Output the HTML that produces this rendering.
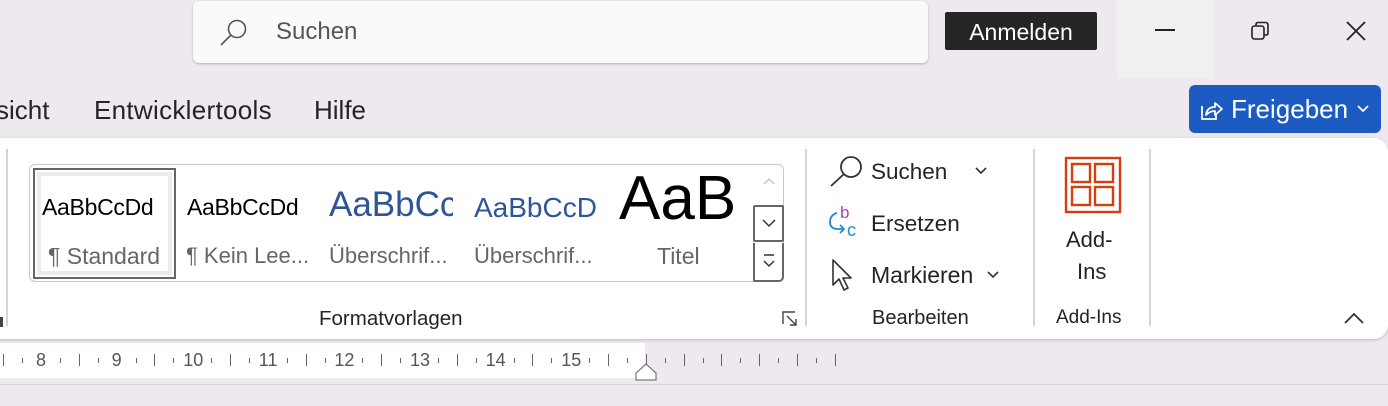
<!DOCTYPE html><html><head><meta charset="utf-8"><style>
*{margin:0;padding:0;box-sizing:border-box}
body{width:1388px;height:406px;background:#ede9ef;font-family:"Liberation Sans",sans-serif;position:relative;overflow:hidden;color:#242424}
.a{position:absolute;white-space:nowrap}
.t{font-size:26px;color:#242424}
.tk{position:absolute;width:1px;background:#666}
</style></head><body>
<div class="a" style="left:193px;top:1px;width:735px;height:62px;background:#fafafa;border-radius:6px;box-shadow:0 1px 2px rgba(0,0,0,.25)"></div>
<svg class="a" style="left:218px;top:16px" width="32" height="32" viewBox="0 0 32 32"><circle cx="19" cy="13" r="8.5" fill="none" stroke="#555" stroke-width="1.6"/><line x1="13" y1="19" x2="3" y2="29" stroke="#555" stroke-width="1.6"/></svg>
<div class="a" style="left:276px;top:18px;font-size:24px;color:#555">Suchen</div>
<div class="a" style="left:945px;top:12px;width:152px;height:38px;background:#252525;border-radius:2px;color:#fff;font-size:23px;text-align:center;line-height:40px">Anmelden</div>
<div class="a" style="left:1117px;top:0;width:96px;height:79px;background:#f1eff2"></div>
<div class="a" style="left:1155px;top:29px;width:20px;height:2px;background:#222"></div>
<svg class="a" style="left:1250px;top:20px" width="22" height="22" viewBox="0 0 22 22"><rect x="2" y="6" width="12" height="13" rx="2.5" fill="none" stroke="#222" stroke-width="1.6"/><path d="M6 6V4.5Q6 2.5 8 2.5H15.5Q18 2.5 18 5V13Q18 15 16 15H14" fill="none" stroke="#222" stroke-width="1.6"/></svg>
<svg class="a" style="left:1345px;top:20px" width="22" height="22"><path d="M2 2L20 20M20 2L2 20" stroke="#222" stroke-width="1.8"/></svg>
<div class="a t" style="left:-4px;top:95px">sicht</div>
<div class="a t" style="left:94px;top:95px;letter-spacing:0.3px">Entwicklertools</div>
<div class="a t" style="left:314px;top:95px">Hilfe</div>
<div class="a" style="left:1189px;top:85px;width:192px;height:48px;background:#1c5cc2;border-radius:6px"></div>
<svg class="a" style="left:1199px;top:97px" width="26" height="26" viewBox="0 0 26 26"><path d="M3 9V22H17V18" fill="none" stroke="#fff" stroke-width="1.8"/><path d="M7 18Q8 10 16 10V6L23 12L16 18V14Q11 14 7 18Z" fill="none" stroke="#fff" stroke-width="1.8" stroke-linejoin="round"/></svg>
<div class="a" style="left:1231px;top:94px;font-size:26px;color:#fff">Freigeben</div>
<svg class="a" style="left:1357px;top:104px" width="12" height="10"><path d="M1 2L6 7L11 2" fill="none" stroke="#fff" stroke-width="1.8"/></svg>
<div class="a" style="left:-20px;top:138px;width:1408px;height:201px;background:#fff;border-radius:0 14px 14px 0;box-shadow:0 1px 3px rgba(0,0,0,.2)"></div>
<div class="a" style="left:6px;top:149px;width:2px;height:177px;background:#d4d4d4"></div>
<div class="a" style="left:805px;top:149px;width:2px;height:177px;background:#d4d4d4"></div>
<div class="a" style="left:1033px;top:149px;width:2px;height:177px;background:#d4d4d4"></div>
<div class="a" style="left:1149px;top:149px;width:2px;height:177px;background:#d4d4d4"></div>
<div class="a" style="left:0;top:317px;width:3px;height:10px;background:#444"></div>
<div class="a" style="left:29px;top:164px;width:755px;height:118px;border:1.5px solid #c8c8c8;border-radius:6px"></div>
<div class="a" style="left:33px;top:168px;width:143px;height:111px;border:2px solid #666;background:#fff"></div>
<div class="a" style="left:37px;top:172px;width:135px;height:103px;border:4px solid #ececec"></div>
<div class="a" style="left:42px;top:194px;font-size:23px;color:#000;letter-spacing:-0.3px">AaBbCcDd</div>
<div class="a" style="left:187px;top:194px;font-size:23px;color:#000;letter-spacing:-0.3px">AaBbCcDd</div>
<div class="a" style="left:329px;top:185px;width:124px;overflow:hidden;font-size:35px;color:#2f5597">AaBbCcDd</div>
<div class="a" style="left:474px;top:192px;width:124px;overflow:hidden;font-size:28px;color:#2f5597">AaBbCcDd</div>
<div class="a" style="left:619px;top:163px;font-size:62px;color:#000">AaB</div>
<div class="a" style="left:48px;top:243px;font-size:23px;color:#666">¶ Standard</div>
<div class="a" style="left:186px;top:243px;font-size:22px;color:#666">¶ Kein Lee...</div>
<div class="a" style="left:329px;top:243px;font-size:22px;color:#666">Überschrif...</div>
<div class="a" style="left:474px;top:243px;font-size:22px;color:#666">Überschrif...</div>
<div class="a" style="left:657px;top:243px;font-size:23px;color:#666">Titel</div>
<svg class="a" style="left:763px;top:178px" width="12" height="8"><path d="M1 6L6 1L11 6" fill="none" stroke="#bbb" stroke-width="1.2"/></svg>
<div class="a" style="left:753px;top:205px;width:31px;height:37px;border:2px solid #666;border-radius:2px"></div>
<svg class="a" style="left:762px;top:219px" width="14" height="9"><path d="M1 1L7 7L13 1" fill="none" stroke="#333" stroke-width="1.5"/></svg>
<div class="a" style="left:753px;top:243px;width:31px;height:39px;border:2px solid #666;border-top:none;border-radius:0 0 5px 2px"></div>
<svg class="a" style="left:762px;top:253px" width="14" height="18"><path d="M2 2H12M2 8L7 13L12 8" fill="none" stroke="#333" stroke-width="1.5"/></svg>
<div class="a" style="left:319px;top:307px;font-size:20.5px;color:#242424">Formatvorlagen</div>
<svg class="a" style="left:782px;top:311px" width="16" height="16"><path d="M1 13V1H13M5 5L14 14M8 14H14V8" fill="none" stroke="#444" stroke-width="1.4"/></svg>
<svg class="a" style="left:828px;top:154px" width="36" height="34" viewBox="0 0 36 34"><circle cx="23" cy="13" r="10" fill="none" stroke="#333" stroke-width="1.8"/><line x1="16" y1="20" x2="3" y2="32" stroke="#333" stroke-width="1.8"/></svg>
<div class="a" style="left:871px;top:159px;font-size:22.5px">Suchen</div>
<svg class="a" style="left:974px;top:166px" width="14" height="9"><path d="M2 2L7 7L12 2" fill="none" stroke="#333" stroke-width="1.6"/></svg>
<div class="a" style="left:840px;top:203px;font-size:17px;color:#b040c0">b</div>
<div class="a" style="left:847px;top:220px;font-size:18px;color:#1e8ad6">c</div>
<svg class="a" style="left:828px;top:210px" width="20" height="30"><path d="M9 3Q2 5 2 12Q2 18 8 19H16M12 15L16 19L12 23" fill="none" stroke="#1e8ad6" stroke-width="1.8"/></svg>
<div class="a" style="left:871px;top:211px;font-size:22.5px">Ersetzen</div>
<svg class="a" style="left:830px;top:258px" width="26" height="34" viewBox="0 0 26 34"><path d="M3 2V27L9 21L14 32L18 30L13 20H21Z" fill="none" stroke="#333" stroke-width="1.6" stroke-linejoin="round"/></svg>
<div class="a" style="left:871px;top:262px;font-size:23px">Markieren</div>
<svg class="a" style="left:986px;top:270px" width="14" height="9"><path d="M2 2L7 7L12 2" fill="none" stroke="#333" stroke-width="1.6"/></svg>
<div class="a" style="left:872px;top:307px;font-size:20px">Bearbeiten</div>
<svg class="a" style="left:1064px;top:156px" width="58" height="58" viewBox="0 0 58 58"><rect x="2" y="2" width="54" height="54" fill="none" stroke="#d33f0f" stroke-width="2.4"/><rect x="8" y="8" width="18" height="18" fill="none" stroke="#d33f0f" stroke-width="2.4"/><rect x="31" y="8" width="18" height="18" fill="none" stroke="#d33f0f" stroke-width="2.4"/><rect x="8" y="31" width="18" height="18" fill="none" stroke="#d33f0f" stroke-width="2.4"/><rect x="31" y="31" width="18" height="18" fill="none" stroke="#d33f0f" stroke-width="2.4"/></svg>
<div class="a" style="left:1066px;top:227px;font-size:22px">Add-</div>
<div class="a" style="left:1077px;top:259px;font-size:22px">Ins</div>
<div class="a" style="left:1056px;top:307px;font-size:19px">Add-Ins</div>
<svg class="a" style="left:1343px;top:311px" width="22" height="14"><path d="M2 12L11 3L20 12" fill="none" stroke="#333" stroke-width="1.8"/></svg>
<div class="a" style="left:0;top:343px;width:645px;height:35px;background:#fff"></div>
<div class="a" style="left:0;top:384px;width:1388px;height:1px;background:#d8d4da"></div>
<div id="r"></div>
<svg class="a" style="left:635px;top:363px" width="22" height="18"><path d="M1 17V10L11 1L21 10V17Z" fill="#fff" stroke="#777" stroke-width="1.2"/></svg>
<script>
var r=document.getElementById('r'),h='',s=75.6/4;
for(var i=0;i<60;i++){var x=-34.6+i*s;var n=i%4;var num=7+Math.floor(i/4);
if(x<0)continue;if(x>845)break;
if(n==0){if(num>=8&&x<600)h+='<div class="a" style="left:'+(num>=10?x-9:x-5)+'px;top:350px;font-size:18px;color:#555">'+num+'</div>';else h+='<div class="tk" style="left:'+x+'px;top:354px;height:12px"></div>';}
else if(n==2)h+='<div class="tk" style="left:'+x+'px;top:354px;height:12px"></div>';
else h+='<div class="tk" style="left:'+x+'px;top:358px;height:5px"></div>';}
r.innerHTML=h;
</script>
</body></html>
